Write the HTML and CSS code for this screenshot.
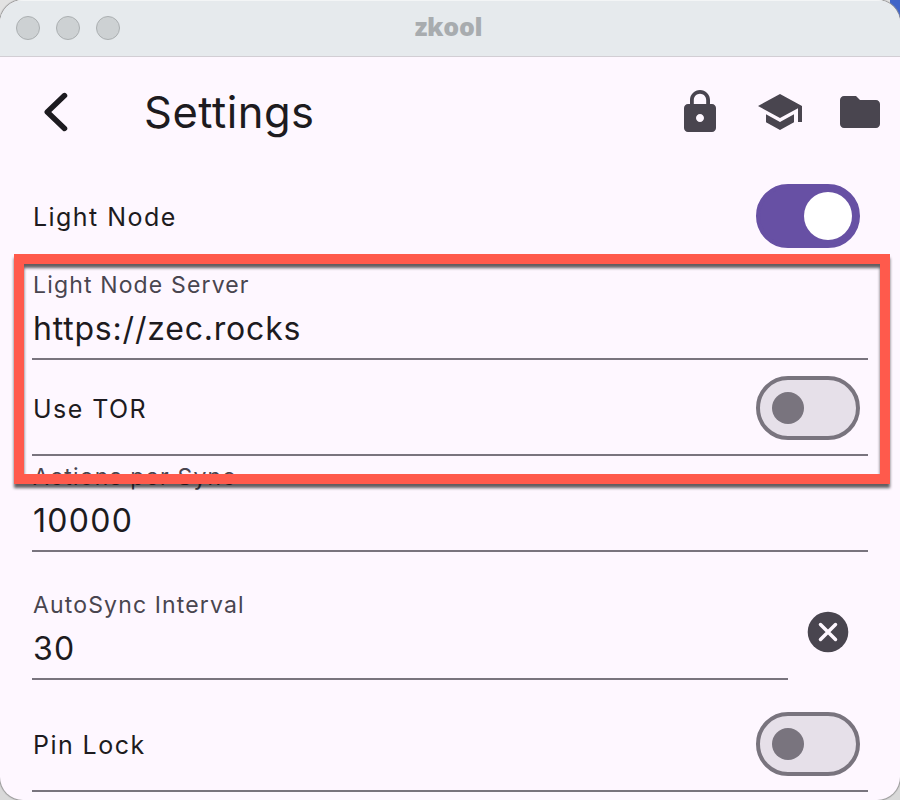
FILE: index.html
```html
<!DOCTYPE html>
<html lang="en">
<head>
<meta charset="utf-8">
<title>zkool</title>
<link rel="stylesheet" href="styles.css">
</head>
<body>
<main class="window">
  <header class="titlebar">
    <div class="lights"><span class="light"></span><span class="light"></span><span class="light"></span></div>
    <span class="window-title">zkool</span>
  </header>
  <nav class="appbar">
    <svg class="icon back" viewBox="0 0 48 48"><path d="M32.500 7.600 15.300 24l17.200 16.400" /></svg>
    <h1 class="page-title">Settings</h1>
    <div class="actions">
      <svg class="icon" viewBox="0 0 24 24"><path d="M18 8h-1V6c0-2.760-2.240-5-5-5S7 3.240 7 6v2H6c-1.100 0-2 .9-2 2v10c0 1.100.9 2 2 2h12c1.100 0 2-.9 2-2V10c0-1.100-.9-2-2-2zm-6 9c-1.100 0-2-.9-2-2s.9-2 2-2 2 .9 2 2-.9 2-2 2zm3.100-9H8.900V6c0-1.710 1.390-3.100 3.100-3.100s3.100 1.390 3.100 3.100z"/></svg>
      <svg class="icon" viewBox="0 0 24 24"><path d="M5 13.180v4L12 21l7-3.820v-4L12 17zM12 3 1 9l11 6 9-4.910V17h2V9z"/></svg>
      <svg class="icon" viewBox="0 0 24 24"><path d="M10 4H4c-1.100 0-2 .9-2 2v12c0 1.100.9 2 2 2h16c1.100 0 2-.9 2-2V8c0-1.100-.9-2-2-2h-8z"/></svg>
    </div>
  </nav>
  <section class="settings">
    <div class="row"><span class="name">Light Node</span><span class="switch on"><i class="thumb"></i></span></div>
    <div class="field"><span class="label">Light Node Server</span><span class="value url">https://zec.rocks</span></div>
    <div class="row lined"><span class="name">Use TOR</span><span class="switch"><i class="thumb"></i></span></div>
    <div class="field"><span class="label">Actions per Sync</span><span class="value">10000</span></div>
    <div class="interval">
      <div class="field"><span class="label">AutoSync Interval</span><span class="value">30</span></div>
      <svg class="icon clear" viewBox="0 0 48 48"><circle cx="24" cy="24" r="20.300"/><path d="m16.500 16.500 15 15m0-15-15 15"/></svg>
    </div>
    <div class="row lined pin-row"><span class="name">Pin Lock</span><span class="switch"><i class="thumb"></i></span></div>
  </section>
</main>
<div class="highlight"></div>
</body>
</html>
```
FILE: styles.css
```css
* { box-sizing: border-box; }
body {
  margin: 0;
  width: 900px;
  height: 800px;
  overflow: hidden;
  background: linear-gradient(90deg, #e2e2e2 0 890px, #3f63c8 890px) 0 0 / 900px 60px no-repeat, #d9d9d9;
  font-family: Inter, "Liberation Sans", sans-serif;
  color: #1d1b20;
}
.window {
  width: 900px;
  height: 800px;
  overflow: hidden;
  border-radius: 23px;
  background: #fef7ff;
  box-shadow: 0 0 1px 1px #999;
}
.titlebar {
  height: 57px;
  display: grid;
  grid-template-columns: 1fr auto 1fr;
  align-items: center;
  padding: 0 16px 1px;
  background: #e6eaed;
  border-top: 1px solid #f3f5f6;
  border-bottom: 1px solid #d2ced4;
}
.lights { display: flex; gap: 16px; }
.light {
  width: 24px;
  height: 24px;
  border: 1px solid #abafb1;
  border-radius: 50%;
  background: #cdd1d3;
}
.window-title {
  font: 800 25px/30px "Open Sans", sans-serif;
  letter-spacing: -0.3px;
  color: #a8acaf;
  padding: 0 3px 4px 0;
}
.appbar {
  height: 111px;
  display: flex;
  align-items: center;
  padding: 0 16px 2px 32px;
}
.icon { width: 48px; height: 48px; flex: none; fill: #49454f; }
.back { fill: none; stroke: #1d1b20; stroke-width: 5.5; stroke-linecap: round; stroke-linejoin: round; }
.page-title {
  margin: 0 0 0 64px;
  font-size: 43.5px;
  line-height: 56px;
  font-weight: 430;
  letter-spacing: 0.5px;
}
.actions { display: flex; gap: 32px; margin-left: auto; }
.settings { padding: 0 32px; }
.row {
  height: 96px;
  display: flex;
  align-items: center;
  justify-content: space-between;
  padding-right: 8px;
}
.lined { border-bottom: 2px solid #79747e; padding-top: 2px; }
.name { font-size: 25px; line-height: 36px; letter-spacing: 1.45px; padding: 2px 0 0 1px; }
.switch {
  width: 104px;
  height: 64px;
  display: flex;
  align-items: center;
  padding: 0 12px;
  border: 4px solid #79747e;
  border-radius: 32px;
  background: #e6e0e9;
}
.thumb { width: 32px; height: 32px; border-radius: 50%; background: #79747e; }
.on { justify-content: flex-end; padding: 0 4px; background: #6750a4; border-color: #6750a4; }
.on .thumb { width: 48px; height: 48px; background: #fff; }
.field {
  height: 96px;
  display: flex;
  flex-direction: column;
  border-bottom: 2px solid #79747e;
  padding: 5px 0 0 1px;
}
.label { font-size: 23px; line-height: 32px; letter-spacing: 1.15px; color: #49454f; }
.value { margin-top: 4px; font-size: 32px; line-height: 48px; letter-spacing: 1.3px; }
.url { letter-spacing: 0.8px; }
.interval { display: flex; height: 128px; padding-top: 32px; }
.interval .field { width: 756px; }
.clear { margin: 24px 0 0 16px; }
.clear path { stroke: #fef7ff; stroke-width: 3.5; stroke-linecap: round; }
.pin-row { height: 112px; padding-top: 18px; }
.highlight {
  position: absolute;
  left: 14px;
  top: 254px;
  width: 876px;
  height: 230px;
  border: 10px solid #ff5a4c;
  filter: drop-shadow(0 4px 1.5px rgb(0 0 0 / 62%));
}
```
